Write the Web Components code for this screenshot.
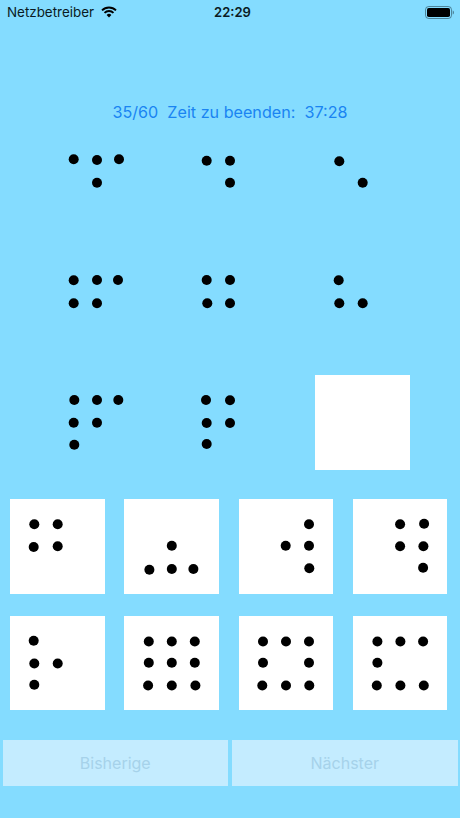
<!DOCTYPE html>
<html>
<head>
<meta charset="utf-8">
<title>Matrix</title>
<style>
  html, body { margin: 0; padding: 0; background: #84dcff; }
</style>
</head>
<body>
<test-screen></test-screen>
<script>
class StatusBar extends HTMLElement {
  constructor() {
    super();
    this.attachShadow({ mode: "open" });
    this.shadowRoot.innerHTML = `
      <style>
        :host {
          display: grid;
          grid-template-columns: 1fr auto 1fr;
          align-items: center;
          height: 24px;
          padding: 0 6px 0 7px;
          color: #0a1a22;
          font: 13.4px/24px Inter, "Liberation Sans", sans-serif;
        }
        .left { display: flex; align-items: center; gap: 7px; }
        .time { font-weight: 600; font-size: 13px; padding-left: 4px; }
        .right { display: flex; justify-content: flex-end; }
        svg { display: block; }
      </style>
      <div class="left">
        <span>Netzbetreiber</span>
        <svg width="16" height="12" viewBox="0 0 16 12">
          <path d="M1 4.4a10 10 0 0 1 14 0" fill="none" stroke="#000" stroke-width="1.9"/>
          <path d="M3.5 6.9a6.4 6.4 0 0 1 9 0" fill="none" stroke="#000" stroke-width="1.9"/>
          <path d="M5.6 9a3.4 3.4 0 0 1 4.8 0L8 11.4z" fill="#000"/>
        </svg>
      </div>
      <span class="time">22:29</span>
      <div class="right">
        <svg width="29" height="13" viewBox="0 0 29 13">
          <rect x="0.5" y="0.5" width="26" height="12" rx="3.2" fill="none" stroke="#0a1a22" stroke-opacity=".45"/>
          <rect x="2" y="2" width="23" height="9" rx="1.8" fill="#000"/>
          <path d="M27.7 4.6c.8.2 1.3 1 1.3 1.9s-.5 1.7-1.3 1.9z" fill="#0a1a22" fill-opacity=".45"/>
        </svg>
      </div>
    `;
  }
}

class TestHeader extends HTMLElement {
  constructor() {
    super();
    this.attachShadow({ mode: "open" });
    this.shadowRoot.innerHTML = `
      <style>
        :host {
          display: block;
          margin-top: 78px;
          height: 20px;
          text-align: center;
          color: #1a84f2;
          font: 16.15px/20px Inter, "Liberation Sans", sans-serif;
        }
        div { white-space: pre; }
      </style>
      <div><slot></slot></div>
    `;
  }
}

class DotBoard extends HTMLElement {
  constructor() {
    super();
    this.attachShadow({ mode: "open" });
  }

  connectedCallback() {
    const dots = (this.getAttribute("dots") || "")
      .split(" ")
      .filter(Boolean)
      .map((p) => p.split(","));
    const size = this.getAttribute("size");
    this.shadowRoot.innerHTML = `
      <style>
        :host { display: block; height: ${size}px; }
        :host([blank]) { background: #fff; }
        svg { display: block; width: ${size}px; height: ${size}px; }
      </style>
      <svg viewBox="0 0 ${size} ${size}">
        ${dots.map(([x, y]) => `<circle cx="${x}" cy="${y}" r="5" fill="#000"/>`).join("")}
      </svg>
    `;
  }
}

class DotGrid extends HTMLElement {
  constructor() {
    super();
    this.attachShadow({ mode: "open" });
    this.shadowRoot.innerHTML = `
      <style>
        :host { display: grid; }
        :host([kind="matrix"]) {
          grid-template-columns: repeat(3, 95px);
          column-gap: 38px;
          row-gap: 25px;
          margin-top: 13px;
          padding-left: 49px;
        }
        :host([kind="answers"]) {
          grid-template-columns: repeat(4, 94.5px);
          column-gap: 19.8px;
          row-gap: 22px;
          margin-top: 29px;
          padding-left: 10px;
        }
      </style>
      <slot></slot>
    `;
  }
}

class NavButton extends HTMLElement {
  constructor() {
    super();
    this.attachShadow({ mode: "open" });
    this.shadowRoot.innerHTML = `
      <style>
        :host {
          flex: 1;
          display: flex;
          align-items: center;
          justify-content: center;
          height: 46px;
          background: #c4ecff;
          color: #a6d2ea;
          font: 16px Inter, "Liberation Sans", sans-serif;
        }
      </style>
      <slot></slot>
    `;
  }
}

class TestScreen extends HTMLElement {
  constructor() {
    super();
    this.attachShadow({ mode: "open" });
    this.shadowRoot.innerHTML = `
      <style>
        :host { display: block; width: 460px; height: 818px; overflow: hidden; background: #84dcff; }
        .nav { display: flex; gap: 4px; margin-top: 30px; padding: 0 2.5px; }
      </style>
      <status-bar></status-bar>
      <test-header>35/60  Zeit zu beenden:  37:28</test-header>
      <dot-grid kind="matrix">
        <dot-board size="95" dots="24.7,24.3 48,25 70,24.3 48,47.7"></dot-board>
        <dot-board size="95" dots="24.7,25.7 48,25.7 48,47.7"></dot-board>
        <dot-board size="95" dots="24.3,26.3 47.7,47.7"></dot-board>
        <dot-board size="95" dots="24.7,25.3 48,25 69,25 24.7,48.3 48,48.3"></dot-board>
        <dot-board size="95" dots="24.7,25 48,25 25.3,48.3 48,48.3"></dot-board>
        <dot-board size="95" dots="23.7,25.3 24.3,48.3 47.7,48.3"></dot-board>
        <dot-board size="95" dots="25.3,25 48,25 69.3,25 24.7,47.7 48,47.7 25.3,69.7"></dot-board>
        <dot-board size="95" dots="24,25 48,25.3 24.7,48 48,48 24.7,69"></dot-board>
        <dot-board size="95" blank></dot-board>
      </dot-grid>
      <dot-grid kind="answers">
        <dot-board size="94.5" blank dots="24.3,25.3 47.7,25.3 23.7,48 47.7,47.3"></dot-board>
        <dot-board size="94.5" blank dots="47.8,46.7 25.4,70.7 47.8,70 69.4,70"></dot-board>
        <dot-board size="94.5" blank dots="70,25.3 46.7,46.7 70,46.7 70.3,69.3"></dot-board>
        <dot-board size="94.5" blank dots="47.1,25.3 71.1,24.7 47.1,47.3 70.4,47.3 70.1,68.7"></dot-board>
        <dot-board size="94.5" blank dots="23.7,24.8 24.3,47.5 47.7,47.5 24.3,68.8"></dot-board>
        <dot-board size="94.5" blank dots="24.8,25.5 47.8,25.5 70.8,25.5 24.8,46.8 47.8,46.8 70.8,46.8 24.1,69.5 47.8,69.5 71.4,69.5"></dot-board>
        <dot-board size="94.5" blank dots="24,25.5 47,25.5 70,25.5 24,46.8 70,46.8 23.3,69.5 47,69.5 70.3,69.5"></dot-board>
        <dot-board size="94.5" blank dots="24.4,25.5 47.4,25.5 70.1,25.5 24.4,46.8 23.8,69.5 47.4,69.5 70.8,69.5"></dot-board>
      </dot-grid>
      <div class="nav">
        <nav-button>Bisherige</nav-button>
        <nav-button>Nächster</nav-button>
      </div>
    `;
  }
}

customElements.define("status-bar", StatusBar);
customElements.define("test-header", TestHeader);
customElements.define("dot-board", DotBoard);
customElements.define("dot-grid", DotGrid);
customElements.define("nav-button", NavButton);
customElements.define("test-screen", TestScreen);
</script>
</body>
</html>
